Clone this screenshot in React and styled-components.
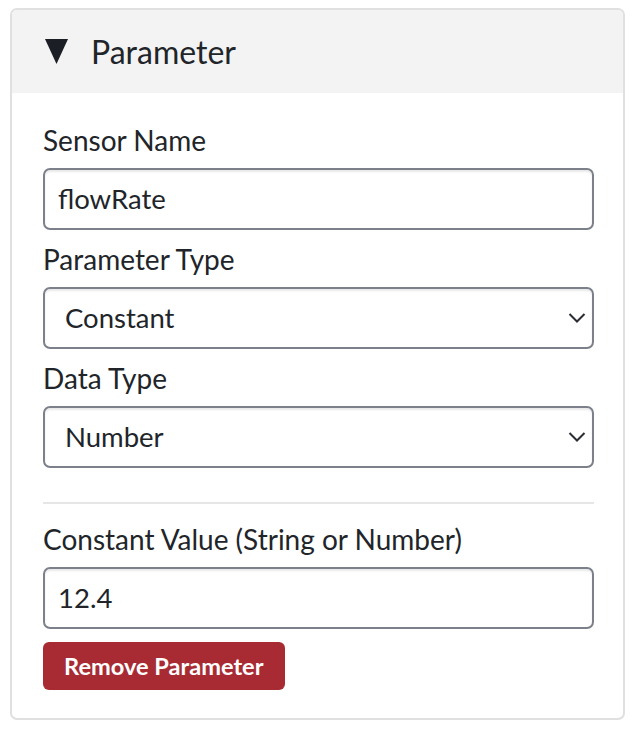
import React from 'react';
import styled, { createGlobalStyle } from 'styled-components';

const GlobalStyle = createGlobalStyle`
  html, body {
    margin: 0;
    padding: 0;
    background: #ffffff;
  }
  body {
    font-family: Lato, "Noto Sans", sans-serif;
    color: #212529;
  }
`;

const Page = styled.div`
  padding: 8px 9px 0 10px;
`;

const Card = styled.section`
  width: 615px;
  box-sizing: border-box;
  border: 2px solid #e0e0e0;
  border-radius: 7px;
  overflow: hidden;
`;

const Header = styled.div`
  display: flex;
  align-items: center;
  gap: 23px;
  height: 83px;
  padding-left: 33px;
  background: #f3f3f3;
  font-size: 32px;
  color: #212529;
`;

const Body = styled.div`
  display: flex;
  flex-direction: column;
  padding: 30px 29px 28px 31px;
`;

const Field = styled.div`
  display: flex;
  flex-direction: column;
  & + & {
    margin-top: 12px;
  }
`;

const Label = styled.label`
  font-size: 28px;
  line-height: 34px;
  margin-bottom: 11px;
`;

const Input = styled.input`
  box-sizing: border-box;
  width: 100%;
  height: 62px;
  padding: 0 13px 2px;
  border: 2px solid #7c808b;
  border-radius: 7px;
  box-shadow: inset 0 2px 2px rgba(0, 0, 0, 0.09);
  font-family: inherit;
  font-size: 27.5px;
  color: #212529;
  background: #fff;
  outline: none;
`;

const SelectWrap = styled.div`
  position: relative;
`;

const Select = styled.select`
  box-sizing: border-box;
  width: 100%;
  height: 62px;
  padding: 0 40px 2px 20px;
  border: 2px solid #7c808b;
  border-radius: 7px;
  box-shadow: inset 0 2px 2px rgba(0, 0, 0, 0.09);
  font-family: inherit;
  font-size: 27.5px;
  color: #212529;
  background: #fff;
  appearance: none;
  outline: none;
`;

const Chevron = styled.svg`
  position: absolute;
  right: 8px;
  top: 50%;
  transform: translateY(-50%);
  pointer-events: none;
`;

const Divider = styled.hr`
  border: none;
  border-top: 2px solid #e6e6e6;
  margin: 34px 0 18px;
`;

const Button = styled.button`
  align-self: flex-start;
  margin-top: 13px;
  height: 48px;
  padding: 0 21px;
  border: none;
  border-radius: 6px;
  background: #a82b33;
  color: #fff;
  font-family: inherit;
  font-weight: 700;
  font-size: 23.6px;
  cursor: pointer;
`;

const Caret = () => (
  <svg width="23" height="25" viewBox="0 0 23 25">
    <polygon points="0,0 23,0 11.5,25" fill="#1b1e24" />
  </svg>
);

const SelectField = ({ label, value }) => (
  <Field>
    <Label>{label}</Label>
    <SelectWrap>
      <Select defaultValue={value}>
        <option>{value}</option>
      </Select>
      <Chevron width="18" height="11" viewBox="0 0 18 11">
        <polyline points="1.5,1.5 9,9 16.5,1.5" fill="none" stroke="#2a2d33" strokeWidth="2" />
      </Chevron>
    </SelectWrap>
  </Field>
);

const App = () => {
  return (
    <>
      <GlobalStyle />
      <Page>
        <Card>
          <Header>
            <Caret />
            <span>Parameter</span>
          </Header>
          <Body>
            <Field>
              <Label>Sensor Name</Label>
              <Input defaultValue="flowRate" />
            </Field>
            <SelectField label="Parameter Type" value="Constant" />
            <SelectField label="Data Type" value="Number" />
            <Divider />
            <Field>
              <Label>Constant Value (String or Number)</Label>
              <Input defaultValue="12.4" />
            </Field>
            <Button>Remove Parameter</Button>
          </Body>
        </Card>
      </Page>
    </>
  );
};

export default App;
